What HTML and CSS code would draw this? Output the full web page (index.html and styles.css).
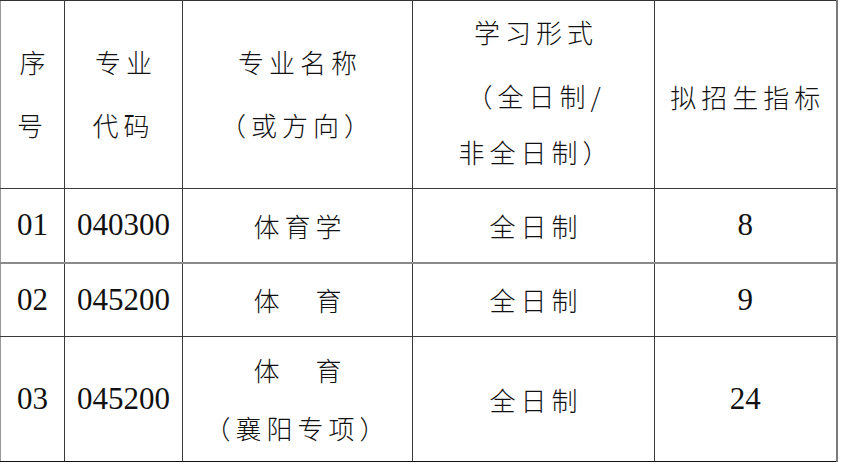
FILE: index.html
```html
<!DOCTYPE html>
<html lang="zh-CN">
<head>
<meta charset="utf-8">
<title>招生指标</title>
<link rel="stylesheet" href="styles.css">
</head>
<body>
<table class="plan">
  <colgroup>
    <col class="c-no">
    <col class="c-code">
    <col class="c-name">
    <col class="c-form">
    <col class="c-quota">
  </colgroup>
  <thead>
    <tr class="head">
      <th><div class="two">序<br>号</div></th>
      <th><div class="two">专业<br>代码</div></th>
      <th><div class="two">专业名称<br>（或方向）</div></th>
      <th>
        <div class="form">
          <div class="fl first">学习形式</div>
          <div class="fl">（全日制/</div>
          <div class="fl">非全日制）</div>
        </div>
      </th>
      <th><span class="cn quota">拟招生指标</span></th>
    </tr>
  </thead>
  <tbody>
    <tr class="row">
      <td class="num">01</td>
      <td class="num">040300</td>
      <td class="cn">体育学</td>
      <td class="cn">全日制</td>
      <td class="num">8</td>
    </tr>
    <tr class="row mid">
      <td class="num">02</td>
      <td class="num">045200</td>
      <td class="cn">体　育</td>
      <td class="cn">全日制</td>
      <td class="num">9</td>
    </tr>
    <tr class="row tall">
      <td class="num">03</td>
      <td class="num">045200</td>
      <td class="cn"><div class="pair">体　育<br>（襄阳专项）</div></td>
      <td class="cn">全日制</td>
      <td class="num">24</td>
    </tr>
  </tbody>
</table>
</body>
</html>
```

FILE: styles.css
```css
html, body {
  margin: 0;
  padding: 0;
  background: #ffffff;
}

.plan {
  border-collapse: collapse;
  table-layout: fixed;
  width: 836px;
  color: #111111;
  font-family: "Noto Sans CJK SC", sans-serif;
  font-weight: 300;
  font-size: 26px;
}

.c-no { width: 64px; }
.c-code { width: 118px; }
.c-name { width: 230px; }
.c-form { width: 242px; }
.c-quota { width: 182px; }

.plan th,
.plan td {
  border: 1px solid #3a3a3a;
  padding: 0;
  text-align: center;
  vertical-align: middle;
  font-weight: 300;
}

.plan tr > :first-child {
  border-left: 1px solid #9a9a9a;
}

.plan tr > :last-child {
  border-right: 2px solid #7a7a7a;
}

.plan thead th {
  border-top: 1px solid #333333;
}

.plan tbody tr:last-child td {
  border-bottom: 1px solid #111111;
}

.head { height: 188px; }
.row { height: 74px; }
.row.tall { height: 125px; }

.row.mid td {
  border-top: 2px solid #8a8a8a;
}

.two {
  line-height: 63px;
  letter-spacing: 5px;
  text-indent: 5px;
  padding-bottom: 4px;
}

.form {
  letter-spacing: 5px;
  text-indent: 5px;
  padding-bottom: 6px;
}

.fl {
  line-height: 56px;
}

.fl.first {
  margin-bottom: 8px;
}

.cn {
  letter-spacing: 5px;
  text-indent: 5px;
}

.quota {
  display: inline-block;
  padding-top: 4px;
}

.pair {
  line-height: 58px;
}

.num {
  font-family: "Liberation Serif", "Times New Roman", serif;
  font-weight: 400;
  font-size: 31px;
  letter-spacing: 0;
}
```
